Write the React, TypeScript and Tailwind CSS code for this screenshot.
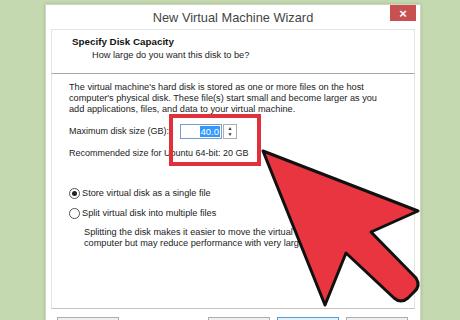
import React from 'react';

const font = { fontFamily: '"Liberation Sans", Arial, sans-serif' };

const Radio = ({ checked }: { checked?: boolean }) => (
  <span className="w-[11px] h-[11px] rounded-full border border-[#555] bg-white flex items-center justify-center shrink-0">
    {checked && <span className="w-[5px] h-[5px] rounded-full bg-[#222]" />}
  </span>
);

const Arrow = () => (
  <svg className="absolute left-0 top-0 pointer-events-none" width="460" height="320" viewBox="0 0 460 320">
    <path
      d="M263 151 L418 211 L371 232 L416 278 Q421 286 414 292 L408 298 Q401 304 394 298 L346 253 L325 305 Z"
      fill="#e8353f"
      stroke="#111"
      strokeWidth="3"
      strokeLinejoin="round"
    />
  </svg>
);

export default function App() {
  return (
    <div className="relative w-[460px] h-[320px] overflow-hidden bg-[#c4d9af] pl-[45px] pt-[4px]" style={font}>
      <div className="w-[376px] h-[330px] bg-white border-x border-t border-[#cfd6c8] shadow-[0_0_3px_rgba(0,0,0,0.15)]">
        <div className="relative h-[24px] flex items-center justify-center">
          <span className="text-[12.8px] text-[#444] pt-[1px]">New Virtual Machine Wizard</span>
          <div className="absolute right-[4px] top-0 w-[26px] h-[16px] bg-[#c85050] flex items-center justify-center text-white text-[13px] font-bold leading-none">
            ×
          </div>
        </div>
        <div className="mx-[5px]">
          <div className="h-[45px] border border-[#e4e4e4] border-b-[#a8a8a8] pl-[20px] pt-[6px]">
            <div className="text-[9.8px] font-bold text-[#111] leading-[12px]">Specify Disk Capacity</div>
            <div className="text-[9.2px] text-[#222] pl-[20px] leading-[12px] mt-[1px]">How large do you want this disk to be?</div>
          </div>
          <div className="h-[235px] border-x border-b border-[#e4e4e4] border-b-[#c4c4c4] pl-[17px] pt-[8px] text-[9.2px] text-[#222] leading-[11px]">
            <p>The virtual machine's hard disk is stored as one or more files on the host</p>
            <p>computer's physical disk. These file(s) start small and become larger as you</p>
            <p>add applications, files, and data to your virtual machine.</p>
            <div className="flex items-center mt-[9px] h-[15px] text-[9px]">
              <span className="w-[111px]">Maximum disk size (GB):</span>
              <div className="w-[42px] h-[15px] border border-[#7a9cc6] bg-white flex items-center justify-end pr-[1px]">
                <span className="bg-[#3399ff] text-white px-[1px] leading-[11px] text-[9.5px]">40.0</span>
              </div>
              <div className="ml-[1px] w-[14px] h-[15px] border border-[#adadad] flex flex-col items-center justify-around text-[5px] leading-none text-[#333]">
                <span>▲</span>
                <span>▼</span>
              </div>
            </div>
            <p className="mt-[9px] text-[9px]">Recommended size for Ubuntu 64-bit: 20 GB</p>
            <label className="flex items-center gap-[2px] mt-[29px] text-[9.2px]">
              <Radio checked />
              <span>Store virtual disk as a single file</span>
            </label>
            <label className="flex items-center gap-[2px] mt-[9px] text-[9.2px]">
              <Radio />
              <span>Split virtual disk into multiple files</span>
            </label>
            <div className="pl-[15px] mt-[8px]">
              <p>Splitting the disk makes it easier to move the virtual machine to another</p>
              <p>computer but may reduce performance with very large disks.</p>
            </div>
          </div>
          <div className="flex pt-[8px] pl-[6px] gap-[7px]">
            <div className="w-[62px] h-[20px] border border-[#adadad] bg-[#f0f0f0] mr-[82px]" />
            <div className="w-[62px] h-[20px] border border-[#adadad] bg-[#f0f0f0]" />
            <div className="w-[62px] h-[20px] border border-[#5a9ad6] bg-[#e5f1fb]" />
            <div className="w-[62px] h-[20px] border border-[#adadad] bg-[#f0f0f0]" />
          </div>
        </div>
      </div>
      <div className="absolute left-[169px] top-[114px] w-[92px] h-[52px] border-[4px] border-[#e0303c]" />
      <Arrow />
    </div>
  );
}
